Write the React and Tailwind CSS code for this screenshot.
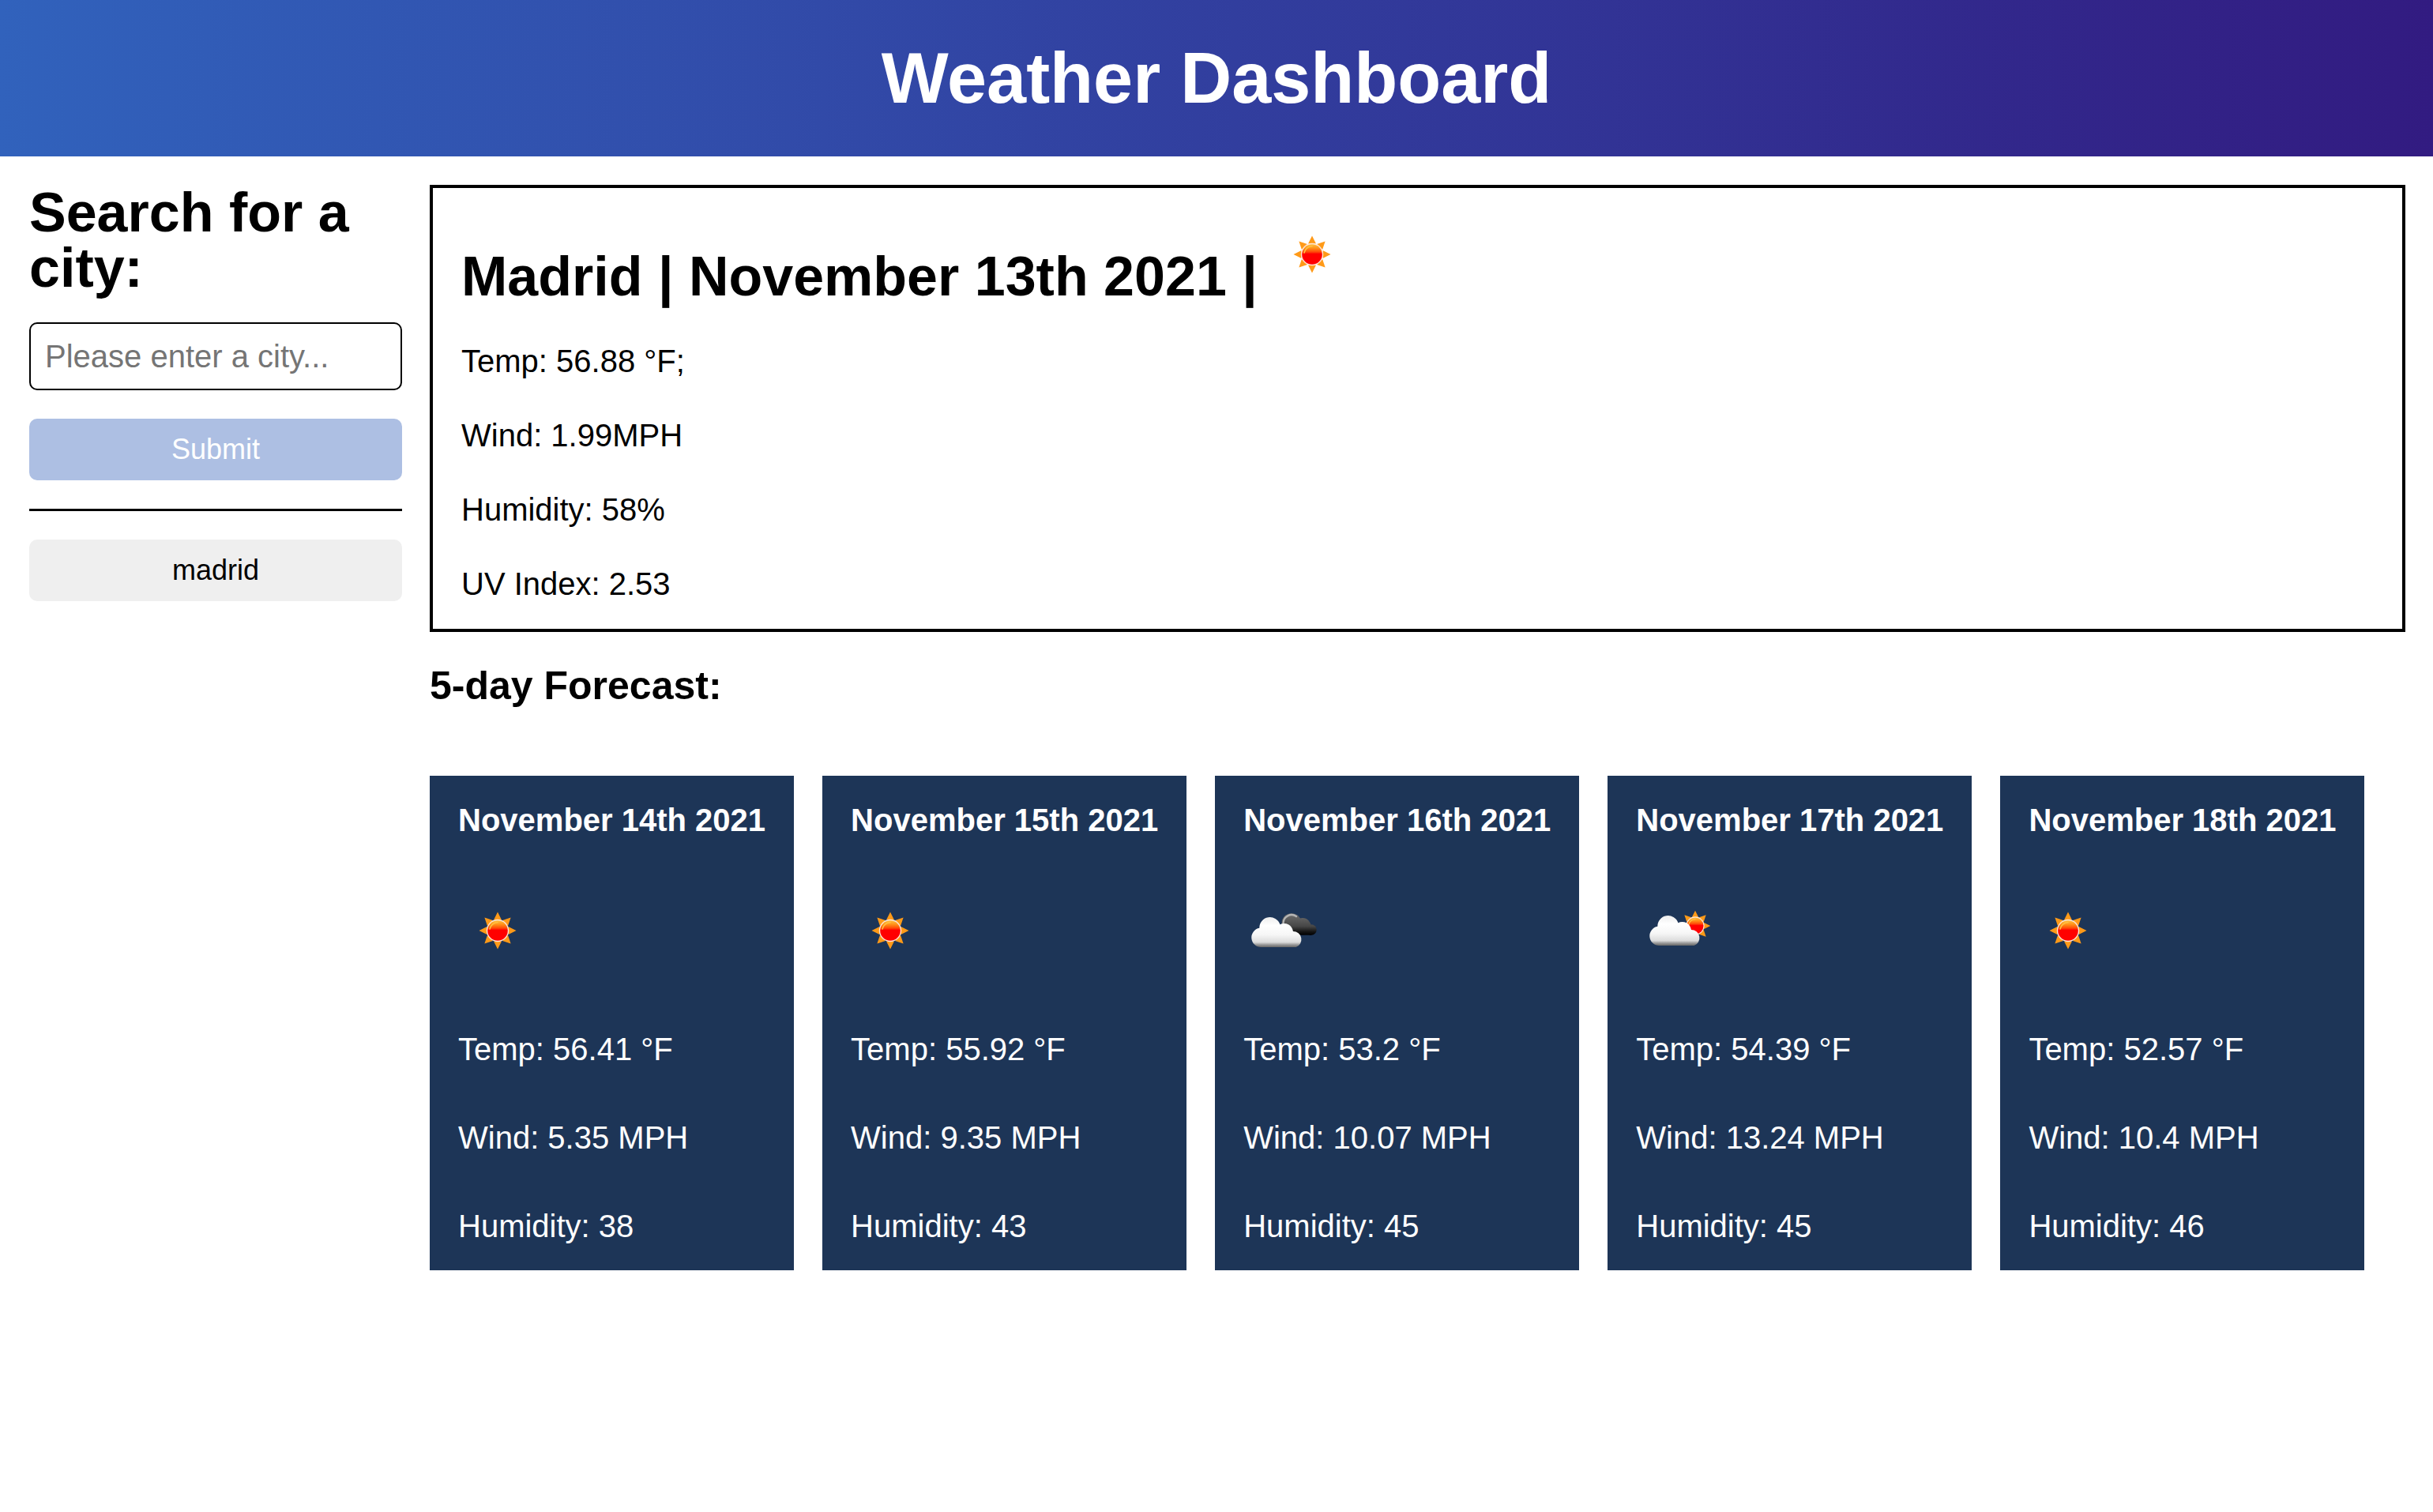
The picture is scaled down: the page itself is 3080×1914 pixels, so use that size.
import React, { useId } from "react";

const days = [
  { date: "November 14th 2021", icon: "sun", temp: "56.41", wind: "5.35", humidity: 38 },
  { date: "November 15th 2021", icon: "sun", temp: "55.92", wind: "9.35", humidity: 43 },
  { date: "November 16th 2021", icon: "clouds", temp: "53.2", wind: "10.07", humidity: 45 },
  { date: "November 17th 2021", icon: "cloudSun", temp: "54.39", wind: "13.24", humidity: 45 },
  { date: "November 18th 2021", icon: "sun", temp: "52.57", wind: "10.4", humidity: 46 },
];

const labels = { sun: "Clear sky", clouds: "Broken clouds", cloudSun: "Few clouds" };

function Sun({ id }) {
  return (
    <g>
      <defs>
        <linearGradient id={id + "s"} x1="0" y1="0" x2="0" y2="1">
          <stop offset="0" stopColor="#ffc040" />
          <stop offset="0.2" stopColor="#ff9018" />
          <stop offset="0.38" stopColor="#ff4a08" />
          <stop offset="0.48" stopColor="#ff0000" />
          <stop offset="1" stopColor="#ff0000" />
        </linearGradient>
      </defs>
      {[0, 45, 90, 135, 180, 225, 270, 315].map((a) => (
        <path key={a} d="M0-23.5 5-13.5H-5Z" fill="#ff9a18" transform={`rotate(${a})`} />
      ))}
      <circle r="14.2" fill="#ffe6d6" />
      <circle r="12.8" fill={`url(#${id}s)`} />
      <path d="M-10-2A10.2 10.2 0 0 1 0-10.2" fill="none" stroke="#ffc040" strokeWidth="1.6" strokeLinecap="round" />
    </g>
  );
}

function Cloud({ id }) {
  return (
    <g>
      <defs>
        <linearGradient id={id + "c"} gradientUnits="userSpaceOnUse" x1="0" y1="30" x2="0" y2="69">
          <stop offset="0" stopColor="#ececec" />
          <stop offset="0.3" stopColor="#ffffff" />
          <stop offset="0.6" stopColor="#f6f6f6" />
          <stop offset="0.84" stopColor="#dcdcdc" />
          <stop offset="0.92" stopColor="#999999" />
          <stop offset="1" stopColor="#666666" />
        </linearGradient>
      </defs>
      <path
        d="M22.5 69A12.2 12.2 0 0 1 20.3 44.8A13.4 13.4 0 0 1 46.4 40.2A11.6 11.6 0 0 1 63 49A10.3 10.3 0 0 1 66.6 69Z"
        fill={`url(#${id}c)`}
      />
    </g>
  );
}

function WeatherIcon({ name }) {
  const id = useId();
  return (
    <svg viewBox="0 0 100 100" role="img" aria-label={labels[name]} className="inline-block size-[100px] align-baseline">
      {name === "sun" && (
        <g transform="translate(50 48)">
          <Sun id={id} />
        </g>
      )}
      {name === "clouds" && (
        <>
          <defs>
            <linearGradient id={id + "d"} gradientUnits="userSpaceOnUse" x1="0" y1="26" x2="0" y2="53.7">
              <stop offset="0" stopColor="#707070" />
              <stop offset="0.6" stopColor="#464646" />
              <stop offset="0.85" stopColor="#141414" />
              <stop offset="1" stopColor="#000000" />
            </linearGradient>
          </defs>
          <g fill={`url(#${id}d)`}>
            <circle cx="61" cy="38.7" r="12.5" />
            <circle cx="75" cy="42.7" r="10.6" />
            <circle cx="86" cy="47" r="6.7" />
            <path d="M61 42H86V53.7H61Z" />
          </g>
          <path d="M50.5 38.7A10.6 10.6 0 0 1 67 30" fill="none" stroke="#b5b5b5" strokeWidth="2.4" strokeLinecap="round" />
          <Cloud id={id} />
        </>
      )}
      {name === "cloudSun" && (
        <>
          <g transform="translate(75 42) scale(.82)">
            <Sun id={id} />
          </g>
          <g transform="translate(7 -2)">
            <Cloud id={id} />
          </g>
        </>
      )}
    </svg>
  );
}

export default function App() {
  return (
    <div className="min-h-screen bg-white font-['Liberation_Sans',Arial,sans-serif] text-[40px] leading-[40px] text-black">
      <header className="bg-[linear-gradient(90deg,#3162bc_0%,#321b81_100%)] px-9 py-[54px] text-center text-white">
        <h1 className="text-[90px] leading-[90px] font-bold">Weather Dashboard</h1>
      </header>

      <div className="flex items-start gap-[35px] py-9 pr-[35px] pl-[37px]">
        <aside className="flex w-[472px] shrink-0 flex-col gap-9">
          <form className="flex flex-col gap-9" onSubmit={(e) => e.preventDefault()}>
            <div>
              <label htmlFor="city" className="mb-[34px] block text-[70px] leading-[70px] font-bold">
                Search for a city:
              </label>
              <input
                id="city"
                type="text"
                placeholder="Please enter a city..."
                className="block h-[86px] w-full rounded-[10px] border-2 border-black bg-white px-[18px] placeholder:text-[#757575]"
              />
            </div>
            <button type="submit" className="h-[78px] rounded-[10px] bg-[#adbfe3] text-[36px] leading-[42px] text-white">
              Submit
            </button>
          </form>
          <hr className="border-0 border-t-3 border-black" />
          <button type="button" className="h-[78px] rounded-[10px] bg-[#efefef] text-[36px] leading-[42px]">
            madrid
          </button>
        </aside>

        <main className="min-w-0 flex-1">
          <section className="border-4 border-black px-9 pt-9 pb-[37px]">
            <h2 className="text-[70px] leading-[70px] font-bold">
              Madrid | November 13th 2021 | <WeatherIcon name="sun" />
            </h2>
            <div className="mt-[52px] flex flex-col gap-[54px]">
              <p>Temp: 56.88 °F;</p>
              <p>Wind: 1.99MPH</p>
              <p>Humidity: 58%</p>
              <p>UV Index: 2.53</p>
            </div>
          </section>

          <h3 className="mt-[43px] text-[50px] leading-[50px] font-bold">5-day Forecast:</h3>

          <div className="mt-[89px] flex flex-wrap gap-9">
            {days.map((d) => (
              <article key={d.date} className="flex flex-col gap-[72px] bg-[#1d3557] p-9 text-white">
                <h4 className="font-bold">{d.date}</h4>
                <div>
                  <WeatherIcon name={d.icon} />
                </div>
                <p>Temp: {d.temp} °F</p>
                <p>Wind: {d.wind} MPH</p>
                <p>Humidity: {d.humidity}</p>
              </article>
            ))}
          </div>
        </main>
      </div>
    </div>
  );
}
